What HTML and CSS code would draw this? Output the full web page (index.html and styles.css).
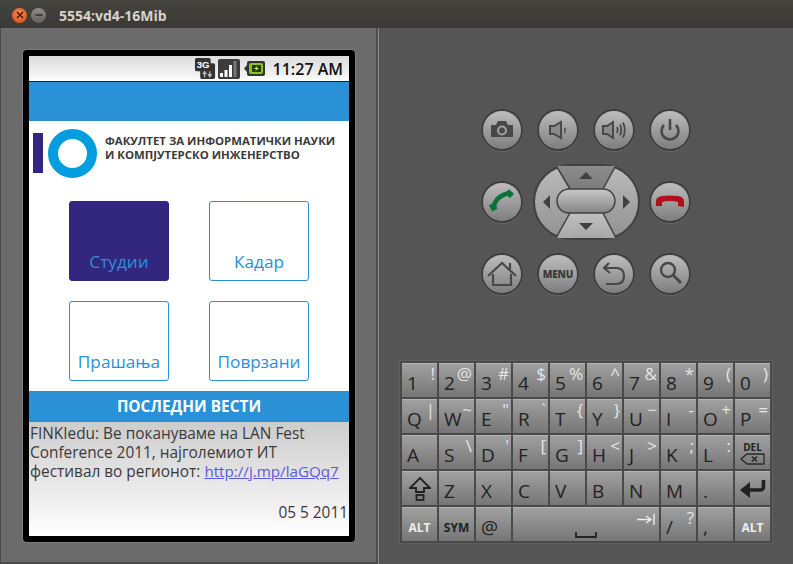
FILE: index.html
```html
<!DOCTYPE html>
<html lang="en">
<head>
    <meta charset="UTF-8">
    <title>5554:vd4-16Mib</title>
    <link rel="stylesheet" href="styles.css">
</head>
<body>
    <div class="titlebar">
        <span class="win-btn win-close"><svg width="8" height="8" viewBox="0 0 8 8"><path d="M1 1L7 7M7 1L1 7" stroke="#4a1a08" stroke-width="1.6"/></svg></span>
        <span class="win-btn win-min"><svg width="8" height="8" viewBox="0 0 8 8"><path d="M0.5 4H7.5" stroke="#333" stroke-width="1.6"/></svg></span>
        <span class="win-title">5554:vd4-16Mib</span>
    </div>

    <div class="emulator">
        <div class="left-panel">
            <div class="phone">
                <div class="screen">
                    <div class="statusbar">
                        <svg class="st-3g" width="22" height="21" viewBox="0 0 25 24">
                            <path d="M1 2Q1 0 3 0H17Q19 0 19 2V6H22Q24 6 24 8V22Q24 24 22 24H9Q7 24 7 22V15H3Q1 15 1 13Z" fill="#333"/>
                            <text x="3" y="11" class="st-3g-text">3G</text>
                            <path d="M12 22V17M10 18.500L12 15.500L14 18.500M18 15V20M16 18.500L18 21.500L20 18.500" fill="none" stroke="#bbb" stroke-width="1.500"/>
                        </svg>
                        <svg class="st-signal" width="22" height="20" viewBox="0 0 22 20">
                            <rect width="22" height="20" rx="2" fill="#3c3c3c"/>
                            <rect x="2" y="14" width="3" height="4" fill="#fff"/>
                            <rect x="6.500" y="11" width="3" height="7" fill="#fff"/>
                            <rect x="11" y="6" width="3" height="12" fill="#fff"/>
                            <rect x="15.500" y="2" width="3" height="16" fill="#777"/>
                        </svg>
                        <svg class="st-battery" width="21" height="15" viewBox="0 0 21 15">
                            <path d="M0 7.500L3 4V2Q3 0 5 0H19Q21 0 21 2V13Q21 15 19 15H5Q3 15 3 13V11Z" fill="#333"/>
                            <rect x="5" y="2" width="14" height="11" rx="2" fill="#8cc21f"/>
                            <rect x="8" y="4" width="9" height="7" fill="#2c3a10"/>
                            <path d="M14 4.500L10 8H12.500L11 10.500L15 7H12.500Z" fill="#d5f08a"/>
                        </svg>
                        <span class="st-time">11:27 AM</span>
                    </div>
                    <div class="topbar"></div>
                    <div class="brand">
                        <span class="brand-bar"></span>
                        <span class="brand-ring"></span>
                        <p class="brand-name">ФАКУЛТЕТ ЗА ИНФОРМАТИЧКИ НАУКИ<br>И КОМПЈУТЕРСКО ИНЖЕНЕРСТВО</p>
                    </div>
                    <div class="menu">
                        <a class="tile tile-active">Студии</a>
                        <a class="tile">Кадар</a>
                        <a class="tile">Прашања</a>
                        <a class="tile">Поврзани</a>
                    </div>
                    <div class="news-head">ПОСЛЕДНИ ВЕСТИ</div>
                    <div class="news">
                        <p class="news-text">FINKIedu: Ве покануваме на LAN Fest Conference 2011, најголемиот ИТ фестивал во регионот: <a class="news-link">http://j.mp/laGQq7</a></p>
                        <p class="news-date">05 5 2011</p>
                    </div>
                </div>
            </div>
        </div>

        <div class="right-panel">
            <div class="controls">
                <div class="ctl-row">
                    <span class="round"><svg width="40" height="40" viewBox="0 0 40 40">
                        <path d="M9 15H14L16 11H24L26 15H31V27H9Z" fill="#484848"/>
                        <circle cx="20" cy="20.500" r="5" fill="#a0a0a0"/><circle cx="20" cy="20.500" r="3" fill="#4c4c4c"/>
                    </svg></span>
                    <span class="round"><svg width="40" height="40" viewBox="0 0 40 40">
                        <path d="M12 16H16L23 12V28L16 24H12Z" fill="#8a8a8a" stroke="#484848" stroke-width="2"/>
                        <path d="M26.500 18Q28 20.500 26.500 23" fill="none" stroke="#484848" stroke-width="1.600"/>
                    </svg></span>
                    <span class="round"><svg width="40" height="40" viewBox="0 0 40 40">
                        <path d="M9 16H13L19 12V28L13 24H9Z" fill="#8a8a8a" stroke="#484848" stroke-width="2"/>
                        <path d="M23 17Q24.500 20 23 23M26 14.500Q28.500 20 26 25.500M29 12.500Q32.500 20 29 27.500" fill="none" stroke="#484848" stroke-width="1.800"/>
                    </svg></span>
                    <span class="round"><svg width="40" height="40" viewBox="0 0 40 40">
                        <path d="M14 15A8.500 8.500 0 1 0 26 15" fill="none" stroke="#484848" stroke-width="2.600"/>
                        <path d="M20 9V20" stroke="#484848" stroke-width="2.600"/>
                    </svg></span>
                </div>
                <div class="ctl-row ctl-row-mid">
                    <span class="round"><svg width="40" height="40" viewBox="0 0 40 40">
                        <path d="M11.500 25Q14 14 27 11" fill="none" stroke="#08723a" stroke-width="4.400"/>
                        <path d="M25 9.500L30 14" stroke="#08723a" stroke-width="6"/>
                        <path d="M9.500 22L13 28" stroke="#08723a" stroke-width="6"/>
                    </svg></span>
                    <svg class="dpad" width="107" height="76" viewBox="0 0 107 76">
                        <defs>
                            <linearGradient id="padSide" x1="0" y1="0" x2="0" y2="1"><stop offset="0" stop-color="#bcbcbc"/><stop offset="1" stop-color="#909090"/></linearGradient>
                            <linearGradient id="padTop" x1="0" y1="0" x2="0" y2="1"><stop offset="0" stop-color="#8c8c8c"/><stop offset="1" stop-color="#7c7c7c"/></linearGradient>
                            <linearGradient id="padBottom" x1="0" y1="0" x2="0" y2="1"><stop offset="0" stop-color="#c0c0c0"/><stop offset="1" stop-color="#a8a8a8"/></linearGradient>
                            <linearGradient id="padPill" x1="0" y1="0" x2="0" y2="1"><stop offset="0" stop-color="#c8c8c8"/><stop offset="1" stop-color="#858585"/></linearGradient>
                        </defs>
                        <rect x="1" y="1" width="105" height="74" rx="37" fill="url(#padSide)" stroke="#404040" stroke-width="2"/>
                        <path d="M24 2H82L70 25H37Z" fill="url(#padTop)"/>
                        <path d="M37 49H70L82 74H24Z" fill="url(#padBottom)"/>
                        <path d="M24 3L37 25M82 3L70 25M37 49L24 72M70 49L82 72" stroke="#404040" stroke-width="1.500"/>
                        <rect x="24" y="25" width="58" height="24" rx="12" fill="url(#padPill)" stroke="#404040" stroke-width="1.500"/>
                        <path d="M53 8L46 15H60ZM46 59H60L53 66ZM17 31V45L10 38ZM90 31V45L97 38Z" fill="#404040"/>
                    </svg>
                    <span class="round"><svg width="40" height="40" viewBox="0 0 40 40">
                        <path d="M6 24V19Q6 15 12 14Q20 13 28 14Q34 15 34 19V25L28 24V20Q20 18 12 20V24Z" fill="#b3101e"/>
                    </svg></span>
                </div>
                <div class="ctl-row">
                    <span class="round"><svg width="40" height="40" viewBox="0 0 40 40">
                        <path d="M6 22L20 9L34 22M28 15V9M11 20V31H16M29 20V31H24M16 31H24" fill="none" stroke="#484848" stroke-width="2.200"/>
                    </svg></span>
                    <span class="round round-text">MENU</span>
                    <span class="round"><svg width="40" height="40" viewBox="0 0 40 40">
                        <path d="M15 9L10 14L16 19M10 14H22Q30 14 30 22T22 30H12" fill="none" stroke="#484848" stroke-width="2.200"/>
                    </svg></span>
                    <span class="round"><svg width="40" height="40" viewBox="0 0 40 40">
                        <circle cx="18" cy="16" r="7" fill="none" stroke="#484848" stroke-width="2.400"/>
                        <path d="M23 21L31 29" stroke="#484848" stroke-width="3"/>
                    </svg></span>
                </div>
            </div>

            <div class="keyboard">
                <div class="key"><b>1</b><i>!</i></div>
                <div class="key"><b>2</b><i>@</i></div>
                <div class="key"><b>3</b><i>#</i></div>
                <div class="key"><b>4</b><i>$</i></div>
                <div class="key"><b>5</b><i>%</i></div>
                <div class="key"><b>6</b><i>^</i></div>
                <div class="key"><b>7</b><i>&amp;</i></div>
                <div class="key"><b>8</b><i>*</i></div>
                <div class="key"><b>9</b><i>(</i></div>
                <div class="key"><b>0</b><i>)</i></div>

                <div class="key"><b>Q</b><i>|</i></div>
                <div class="key"><b>W</b><i>~</i></div>
                <div class="key"><b>E</b><i>"</i></div>
                <div class="key"><b>R</b><i>`</i></div>
                <div class="key"><b>T</b><i>{</i></div>
                <div class="key"><b>Y</b><i>}</i></div>
                <div class="key"><b>U</b><i>−</i></div>
                <div class="key"><b>I</b><i>-</i></div>
                <div class="key"><b>O</b><i>+</i></div>
                <div class="key"><b>P</b><i>=</i></div>

                <div class="key"><b>A</b></div>
                <div class="key"><b>S</b><i>\</i></div>
                <div class="key"><b>D</b><i>'</i></div>
                <div class="key"><b>F</b><i>[</i></div>
                <div class="key"><b>G</b><i>]</i></div>
                <div class="key"><b>H</b><i>&lt;</i></div>
                <div class="key"><b>J</b><i>&gt;</i></div>
                <div class="key"><b>K</b><i>;</i></div>
                <div class="key"><b>L</b><i>:</i></div>
                <div class="key key-del">
                    <span>DEL</span>
                    <svg width="25" height="12" viewBox="0 0 25 12"><path d="M1 6L7 1H24V11H7Z" fill="none" stroke="#2a2a2a" stroke-width="1.300"/><path d="M12 3.500L17 8.500M17 3.500L12 8.500" stroke="#2a2a2a" stroke-width="1.600"/></svg>
                </div>

                <div class="key key-icon"><svg width="22" height="24" viewBox="0 0 22 24"><path d="M11 1L21 11H15V15H7V11H1Z" fill="none" stroke="#222" stroke-width="1.800"/><rect x="7.500" y="18" width="7" height="5" fill="none" stroke="#222" stroke-width="1.800"/></svg></div>
                <div class="key"><b>Z</b></div>
                <div class="key"><b>X</b></div>
                <div class="key"><b>C</b></div>
                <div class="key"><b>V</b></div>
                <div class="key"><b>B</b></div>
                <div class="key"><b>N</b></div>
                <div class="key"><b>M</b></div>
                <div class="key"><b>.</b></div>
                <div class="key key-icon"><svg width="26" height="20" viewBox="0 0 26 20"><path d="M23.500 1V8Q23.500 11 20 11H6" fill="none" stroke="#222" stroke-width="3.600"/><path d="M0 11L10 3V19Z" fill="#222"/></svg></div>

                <div class="key key-small key-light">ALT</div>
                <div class="key key-small">SYM</div>
                <div class="key"><b>@</b></div>
                <div class="key key-space">
                    <svg class="tab-icon" width="18" height="11" viewBox="0 0 18 11"><path d="M0 5.500H13M9 2L14 5.500L9 9M17 0V11" fill="none" stroke="#eee" stroke-width="1.400"/></svg>
                    <svg class="space-icon" width="22" height="6" viewBox="0 0 22 6"><path d="M1 0V5H21V0" fill="none" stroke="#222" stroke-width="1.800"/></svg>
                </div>
                <div class="key"><b>/</b><i>?</i></div>
                <div class="key"><b>,</b></div>
                <div class="key key-small key-light">ALT</div>
            </div>
        </div>
    </div>
</body>
</html>
```
FILE: styles.css
```css
html, body {
    margin: 0;
    padding: 0;
}
body {
    width: 793px;
    height: 564px;
    overflow: hidden;
    font-family: "Open Sans", "Noto Sans", sans-serif;
    background-color: #555;
    display: flex;
    flex-direction: column;
}

/* window title */
.titlebar {
    height: 28px;
    flex: none;
    box-sizing: border-box;
    display: flex;
    align-items: center;
    padding: 2px 0 0 12px;
    background: linear-gradient(#45443f, #3a3935);
}
.win-btn {
    width: 15px;
    height: 15px;
    border-radius: 50%;
    margin-right: 4px;
    display: flex;
    align-items: center;
    justify-content: center;
}
.win-close {
    background: radial-gradient(circle at 50% 35%, #f58a4f, #d8460f);
}
.win-min {
    background: linear-gradient(#8d8c86, #62615c);
}
.win-title {
    margin-left: 9px;
    color: #d6d3ca;
    font-size: 14px;
    font-weight: 700;
}

.emulator {
    flex: 1;
    display: flex;
    min-height: 0;
}

/* left side with the phone */
.left-panel {
    width: 378px;
    flex: none;
    box-sizing: border-box;
    background-color: #6b6b6b;
    border-right: 2px solid #4e4e4e;
    border-left: 1px solid #4a4a4a;
    border-bottom: 2px solid #4a4a4a;
    padding: 22px 0 0 22px;
}
.phone {
    width: 320px;
    height: 480px;
    padding: 6px;
    background-color: #000;
    border-radius: 4px;
    box-shadow: 0 0 0 1px #7c7c7c;
}
.screen {
    height: 480px;
    display: flex;
    flex-direction: column;
    background-color: #fff;
}
.statusbar {
    height: 26px;
    flex: none;
    box-sizing: border-box;
    display: flex;
    align-items: center;
    justify-content: flex-end;
    padding-right: 6px;
    background: linear-gradient(#dcdcdc, #f0f0f0 70%, #fff);
    border-bottom: 1px solid #123;
}
.st-3g {
    margin-right: 2px;
}
.st-3g-text {
    font-family: "Liberation Sans", sans-serif;
    font-size: 11px;
    font-weight: 700;
    fill: #fff;
}
.st-signal {
    margin-right: 4px;
}
.st-battery {
    margin-right: 8px;
}
.st-time {
    font-size: 16px;
    font-weight: 600;
    color: #111;
}
.topbar {
    height: 39px;
    flex: none;
    background-color: #2a91d6;
}
.brand {
    height: 80px;
    flex: none;
    box-sizing: border-box;
    display: flex;
    align-items: flex-start;
    padding: 8px 0 0 4px;
}
.brand-bar {
    width: 10px;
    height: 40px;
    margin: 4px 5px 0 0;
    background-color: #32267f;
}
.brand-ring {
    width: 49px;
    height: 49px;
    flex: none;
    box-sizing: border-box;
    border: 10px solid #009ddf;
    border-radius: 50%;
}
.brand-name {
    margin: 5px 0 0 8px;
    color: #3a3a3a;
    font-size: 11.400px;
    font-weight: 700;
    line-height: 14px;
    white-space: nowrap;
}
.menu {
    display: grid;
    grid-template-columns: 100px 100px;
    grid-auto-rows: 80px;
    gap: 20px 40px;
    padding-left: 40px;
    height: 190px;
    flex: none;
}
.tile {
    box-sizing: border-box;
    border: 1px solid #2a91d6;
    border-radius: 3px;
    color: #2a91d6;
    font-size: 17.200px;
    line-height: 22px;
    padding-bottom: 7px;
    display: flex;
    align-items: flex-end;
    justify-content: center;
}
.tile-active {
    background-color: #32267f;
    border-color: #32267f;
}
.news-head {
    height: 31px;
    flex: none;
    display: flex;
    align-items: center;
    justify-content: center;
    background-color: #2a91d6;
    color: #fff;
    font-size: 15.400px;
    font-weight: 700;
}
.news {
    flex: 1;
    background: linear-gradient(#ccc, #fff);
    color: #3a3a3a;
    font-size: 15.400px;
    line-height: 19px;
}
.news-text {
    margin: 2px 0 0 1px;
}
.news-link {
    color: #5a5ae0;
    font-size: 15.200px;
    text-decoration: underline;
}
.news-date {
    margin: 22px 1px 0 0;
    text-align: right;
}

/* right side with the controls */
.right-panel {
    flex: 1;
    background-color: #555;
    border-left: 1px solid #8a8a8a;
    box-sizing: border-box;
    padding-top: 83px;
    display: flex;
    flex-direction: column;
}
.controls {
    width: 206px;
    height: 182px;
    margin-left: 104px;
    display: flex;
    flex-direction: column;
    justify-content: space-between;
}
.ctl-row {
    display: flex;
    justify-content: space-between;
    align-items: center;
    height: 38px;
}
.ctl-row-mid {
    height: 76px;
}
.round {
    width: 38px;
    height: 38px;
    border-radius: 50%;
    background: linear-gradient(#bdbdbd, #7e7e7e);
    box-shadow: 0 0 0 2px #3f3f3f, 0 1px 0 2px #666;
    display: flex;
    align-items: center;
    justify-content: center;
}
.round svg {
    flex: none;
}
.round-text {
    color: #3a3a3a;
    font-size: 10px;
    font-weight: 800;
    letter-spacing: -0.2px;
}

/* keyboard */
.keyboard {
    width: 368px;
    margin: 68px 0 0 21px;
    padding: 2px;
    display: grid;
    grid-template-columns: repeat(10, 35px);
    grid-auto-rows: 34px;
    gap: 2px;
    background-color: #4a4a4a;
    box-shadow: 0 0 0 1px #5f5f5f;
}
.key {
    box-sizing: border-box;
    display: flex;
    justify-content: space-between;
    padding: 0 2px 3px 5px;
    overflow: hidden;
    background: linear-gradient(#a0a0a0, #767676);
    border-top: 1px solid #b4b4b4;
}
.key b {
    align-self: flex-end;
    color: #222;
    font-size: 19px;
    font-weight: 400;
    line-height: 22px;
}
.key i {
    align-self: flex-start;
    color: #e6e6e6;
    font-size: 17px;
    font-style: normal;
    line-height: 20px;
}
.key-icon {
    align-items: center;
    justify-content: center;
    padding: 0;
}
.key-del {
    flex-direction: column;
    align-items: center;
    justify-content: center;
    padding: 0;
    color: #222;
    font-size: 10px;
    font-weight: 700;
    line-height: 12px;
}
.key-small {
    align-items: center;
    justify-content: center;
    padding: 6px 0 0;
    color: #222;
    font-size: 12px;
    font-weight: 700;
}
.key-light {
    color: #eee;
}
.key-space {
    grid-column: span 4;
    flex-direction: column;
    justify-content: flex-end;
    padding: 0 0 3px;
}
.tab-icon {
    align-self: flex-end;
    margin: 0 4px 7px 0;
}
.space-icon {
    align-self: center;
}
```
